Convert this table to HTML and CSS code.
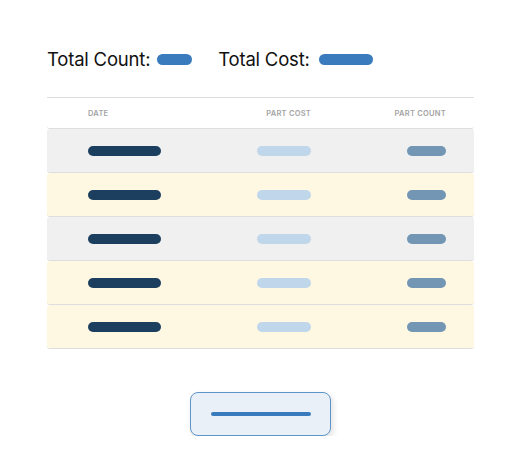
FILE: index.html
```html
<!DOCTYPE html>
<html lang="en">
  <head>
    <title>Parts Summary</title>
    <link rel="stylesheet" href="styles.css">
  </head>

  <body>
    <div class="totals">
      <span class="total">Total Count: <span class="pill pill-count"></span></span>
      <span class="total">Total Cost: <span class="pill pill-cost"></span></span>
    </div>

    <div class="table">
      <div class="row head">
        <div class="cell date">DATE</div>
        <div class="cell cost">PART COST</div>
        <div class="cell count">PART COUNT</div>
      </div>
      <div class="row grey">
        <div class="cell date"><span class="bar bar-date"></span></div>
        <div class="cell cost"><span class="bar bar-cost"></span></div>
        <div class="cell count"><span class="bar bar-count"></span></div>
      </div>
      <div class="row yellow">
        <div class="cell date"><span class="bar bar-date"></span></div>
        <div class="cell cost"><span class="bar bar-cost"></span></div>
        <div class="cell count"><span class="bar bar-count"></span></div>
      </div>
      <div class="row grey">
        <div class="cell date"><span class="bar bar-date"></span></div>
        <div class="cell cost"><span class="bar bar-cost"></span></div>
        <div class="cell count"><span class="bar bar-count"></span></div>
      </div>
      <div class="row yellow">
        <div class="cell date"><span class="bar bar-date"></span></div>
        <div class="cell cost"><span class="bar bar-cost"></span></div>
        <div class="cell count"><span class="bar bar-count"></span></div>
      </div>
      <div class="row yellow">
        <div class="cell date"><span class="bar bar-date"></span></div>
        <div class="cell cost"><span class="bar bar-cost"></span></div>
        <div class="cell count"><span class="bar bar-count"></span></div>
      </div>
    </div>

    <div class="actions">
      <button class="more"><span class="line"></span></button>
    </div>
  </body>
</html>
```

FILE: styles.css
```css
body {
  margin: 0;
  padding: 47px 48px 0 47px;
  background: #fff;
  color: #111;
  font-family: Inter, "Noto Sans", sans-serif;
}
.totals {
  display: flex;
  gap: 26px;
  height: 24px;
  align-items: center;
  margin-bottom: 26px;
}
.total {
  display: flex;
  align-items: center;
  gap: 7px;
  font-size: 18.5px;
  letter-spacing: -0.2px;
}
.pill {
  display: inline-block;
  height: 11px;
  border-radius: 6px;
  background: #3a7bbd;
}
.pill-count {
  width: 35px;
}
.pill-cost {
  width: 54px;
  margin-left: 2px;
}
.table {
  border-top: 1px solid #dedede;
}
.row {
  display: flex;
  align-items: center;
  height: 43px;
  border-bottom: 1px solid #dedede;
  border-radius: 3px;
}
.head {
  height: 30px;
  font-size: 7.5px;
  font-weight: 600;
  letter-spacing: 0.25px;
  color: #a3a3a3;
}
.grey {
  background: #f0f0f0;
}
.yellow {
  background: #fef7e2;
}
.cell {
  display: flex;
  box-sizing: border-box;
}
.date {
  width: 167px;
  padding-left: 41px;
}
.cost {
  width: 97px;
  justify-content: flex-end;
}
.count {
  width: 135px;
  justify-content: flex-end;
}
.bar {
  display: inline-block;
  height: 10px;
  border-radius: 5px;
}
.bar-date {
  width: 73px;
  background: #1c3f60;
}
.bar-cost {
  width: 54px;
  background: #c0d6ea;
}
.bar-count {
  width: 39px;
  background: #7296b3;
}
.actions {
  display: flex;
  justify-content: center;
  padding-top: 43px;
}
.more {
  width: 141px;
  height: 44px;
  background: #eaf0f8;
  border: 1px solid #5e95c8;
  border-radius: 8px;
  box-shadow: 2px 3px 6px rgba(0, 0, 0, 0.12);
  display: flex;
  align-items: center;
  justify-content: center;
  padding: 0;
}
.line {
  display: block;
  width: 100px;
  height: 4px;
  border-radius: 2px;
  background: #3a7bbd;
}
```
